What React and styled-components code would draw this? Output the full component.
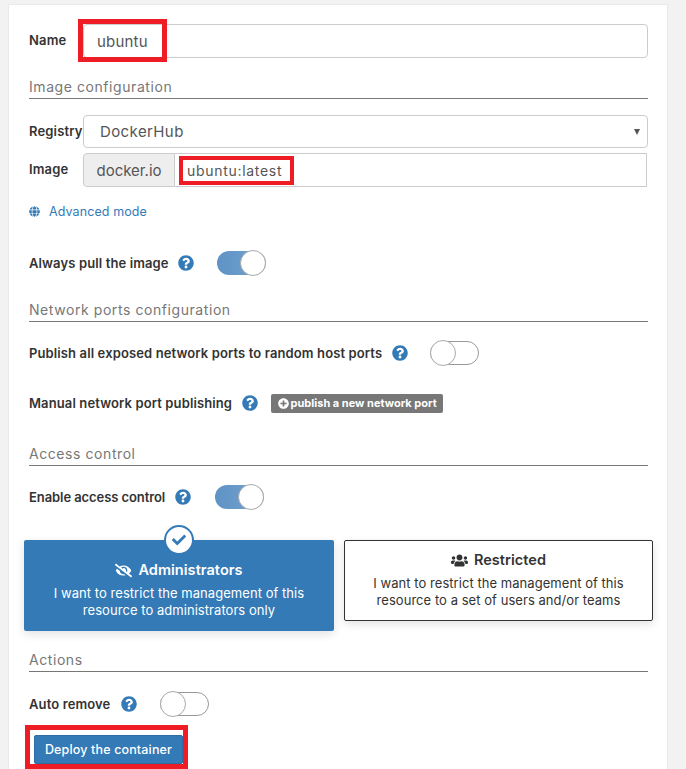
import React from "react";
import styled, { createGlobalStyle } from "styled-components";
import { FaQuestionCircle, FaGlobe, FaEyeSlash, FaUsers, FaPlusCircle, FaCheck } from "react-icons/fa";

const Global = createGlobalStyle`
  html, body { margin: 0; padding: 0; background: #f2f2f2; height: 769px; overflow: hidden; }
  body { font-family: Inter, "Open Sans", sans-serif; color: #333; }
  * { box-sizing: border-box; }
`;
const Panel = styled.div`
  width: 660px; height: 800px; margin: 4px 0 0 8px; background: #fff;
  border: 1px solid #e9e9e9; padding: 19px 19px 0 20px; position: relative;
`;
const Row = styled.div`
  display: flex; align-items: center; height: ${p => p.$h || 34}px; margin-top: ${p => p.$mt || 0}px;
`;
const Label = styled.div`
  width: 54px; flex: none; font-size: 13px; font-weight: 600; color: #333; white-space: nowrap;
  letter-spacing: .15px; padding-bottom: 2px;
`;
const InlineLabel = styled.div`
  font-size: 13px; font-weight: 600; color: #333; white-space: nowrap; letter-spacing: ${p => p.$ls ?? 0.12}px;
`;
const Field = styled.div`
  position: relative; flex: 1; height: 34px; border: 1px solid #ccc; border-radius: 4px;
  display: flex; align-items: center; padding-left: 13px; font-size: 15px; letter-spacing: .2px; color: #555; background: #fff;
`;
const Select = styled(Field)`
  padding-left: 16px; height: 33px; font-size: 15px; letter-spacing: .4px;
`;
const Caret = styled.span`
  position: absolute; right: 7px; top: 13px; width: 0; height: 0;
  border-left: 3px solid transparent; border-right: 3px solid transparent; border-top: 6px solid #555;
`;
const Group = styled.div`
  display: flex; flex: 1; height: 34px; margin-right: 1px; font-size: 14px; color: #555;
`;
const Addon = styled.div`
  width: 92px; flex: none; background: #eee; border: 1px solid #ccc; border-radius: 4px 0 0 4px;
  display: flex; align-items: center; justify-content: center; font-size: 15px;
`;
const GroupInput = styled.div`
  position: relative; flex: 1; border: 1px solid #ccc; border-left: 0;
  display: flex; align-items: center; padding-left: 12px; letter-spacing: .7px;
`;
const Highlight = styled.span`
  position: absolute; border: ${p => p.$b || 5}px solid #ee1c25; pointer-events: none;
`;
const NameMark = styled(Highlight)` left: -6px; top: -6px; width: 89px; height: 43px; `;
const ImageMark = styled(Highlight)` left: 4px; top: 2px; width: 115px; height: 29px; `;
const DeployMark = styled(Highlight)` left: -10px; top: -11px; width: 163px; height: 44px; `;
const Heading = styled.div`
  margin-top: ${p => p.$mt}px; height: 21px; border-bottom: 1px solid #777;
  font-size: 14px; color: #777; line-height: 17px; letter-spacing: .57px;
`;
const AdvancedLink = styled.div`
  margin-top: 16px; height: 16px; display: flex; align-items: center; gap: 9px;
  font-size: 12.5px; color: #337ab7; letter-spacing: .1px;
`;
const Help = styled(FaQuestionCircle)`
  color: #337ab7; font-size: 16px; margin: 0 ${p => p.$r}px 0 ${p => p.$l}px; flex: none;
`;
const Track = styled.span`
  display: block; position: relative; width: 49px; height: 24px; border-radius: 12px; flex: none;
  background: ${p => p.$on ? "linear-gradient(90deg,#5e93c5,#74a3cf)" : "#fff"};
  border: ${p => p.$on ? "0" : "1px solid #999"};
`;
const Knob = styled.span`
  position: absolute; top: ${p => p.$on ? -1 : -2}px; width: 26px; height: 26px; border-radius: 50%;
  background: #fff; border: 1px solid #aaa; ${p => p.$on ? "right: 0;" : "left: -1px;"}
`;
const Toggle = ({ on }) => <Track $on={on}><Knob $on={on} /></Track>;
const PublishButton = styled.div`
  height: 19px; width: 172px; background: #777; border-radius: 2px; color: #fff;
  display: flex; align-items: center; justify-content: center; gap: 2px; font-size: 11px; font-weight: 700; white-space: nowrap;
`;
const Cards = styled.div`
  display: flex; gap: 10px; align-items: flex-start; margin: 30px 0 0 -5px; width: 629px;
`;
const Card = styled.div`
  position: relative; width: ${p => p.$active ? 310 : 309}px; height: ${p => p.$active ? 91 : 81}px;
  border-radius: 2px; text-align: center; font-size: 13px; letter-spacing: .05px; line-height: 17px; padding-top: ${p => p.$active ? 20 : 9}px;
  background: ${p => p.$active ? "#337ab7" : "#fff"}; color: ${p => p.$active ? "#fff" : "#333"};
  border: ${p => p.$active ? "0" : "1px solid #333"};
  box-shadow: 0 3px 10px rgba(0,0,0,.12);
`;
const CardTitle = styled.div`
  display: flex; justify-content: center; align-items: center; gap: 6px; font-size: 14.5px; font-weight: 600; line-height: 20px; margin-bottom: 5px;
  svg { font-size: 17px; }
`;
const CheckBadge = styled.span`
  position: absolute; left: 140px; top: -15px; width: 30px; height: 30px; border-radius: 50%;
  background: #fff; border: 2px solid #337ab7; color: #337ab7; display: flex; align-items: center; justify-content: center; font-size: 14px;
`;
const Deploy = styled.div`
  position: relative; margin: 18px 0 0 5px; width: 149px; height: 29px; background: #337ab7; border: 1px solid #2e6da4; border-radius: 2px;
  color: #fff; font-size: 12.5px; letter-spacing: .15px; font-weight: 500; display: flex; align-items: center; justify-content: center; white-space: nowrap;
`;

export default function App() {
  return (
    <>
      <Global />
      <Panel>
        <Row>
          <Label>Name</Label>
          <Field>ubuntu<NameMark /></Field>
        </Row>
        <Heading $mt={20}>Image configuration</Heading>
        <Row $h={33} $mt={16}>
          <Label>Registry</Label>
          <Select>DockerHub<Caret /></Select>
        </Row>
        <Row $mt={5}>
          <Label>Image</Label>
          <Group>
            <Addon>docker.io</Addon>
            <GroupInput>ubuntu:latest<ImageMark $b={4} /></GroupInput>
          </Group>
        </Row>
        <AdvancedLink><FaGlobe size={11} />Advanced mode</AdvancedLink>
        <Row $h={26} $mt={31}>
          <InlineLabel>Always pull the image</InlineLabel>
          <Help $l={9} $r={23} />
          <Toggle on />
        </Row>
        <Heading $mt={25}>Network ports configuration</Heading>
        <Row $h={26} $mt={18}>
          <InlineLabel>Publish all exposed network ports to random host ports</InlineLabel>
          <Help $l={10} $r={22} />
          <Toggle />
        </Row>
        <Row $h={26} $mt={24}>
          <InlineLabel>Manual network port publishing</InlineLabel>
          <Help $l={10} $r={13} />
          <PublishButton><FaPlusCircle size={11} />publish a new network port</PublishButton>
        </Row>
        <Heading $mt={29}>Access control</Heading>
        <Row $h={26} $mt={18}>
          <InlineLabel $ls={-0.08}>Enable access control</InlineLabel>
          <Help $l={10} $r={24} />
          <Toggle on />
        </Row>
        <Cards>
          <Card $active>
            <CheckBadge><FaCheck /></CheckBadge>
            <CardTitle><FaEyeSlash />Administrators</CardTitle>
            I want to restrict the management of this<br />resource to administrators only
          </Card>
          <Card>
            <CardTitle><FaUsers />Restricted</CardTitle>
            I want to restrict the management of this<br />resource to a set of users and/or teams
          </Card>
        </Cards>
        <Heading $mt={20}>Actions</Heading>
        <Row $h={26} $mt={19}>
          <InlineLabel>Auto remove</InlineLabel>
          <Help $l={11} $r={23} />
          <Toggle />
        </Row>
        <Deploy>Deploy the container<DeployMark /></Deploy>
      </Panel>
    </>
  );
}
